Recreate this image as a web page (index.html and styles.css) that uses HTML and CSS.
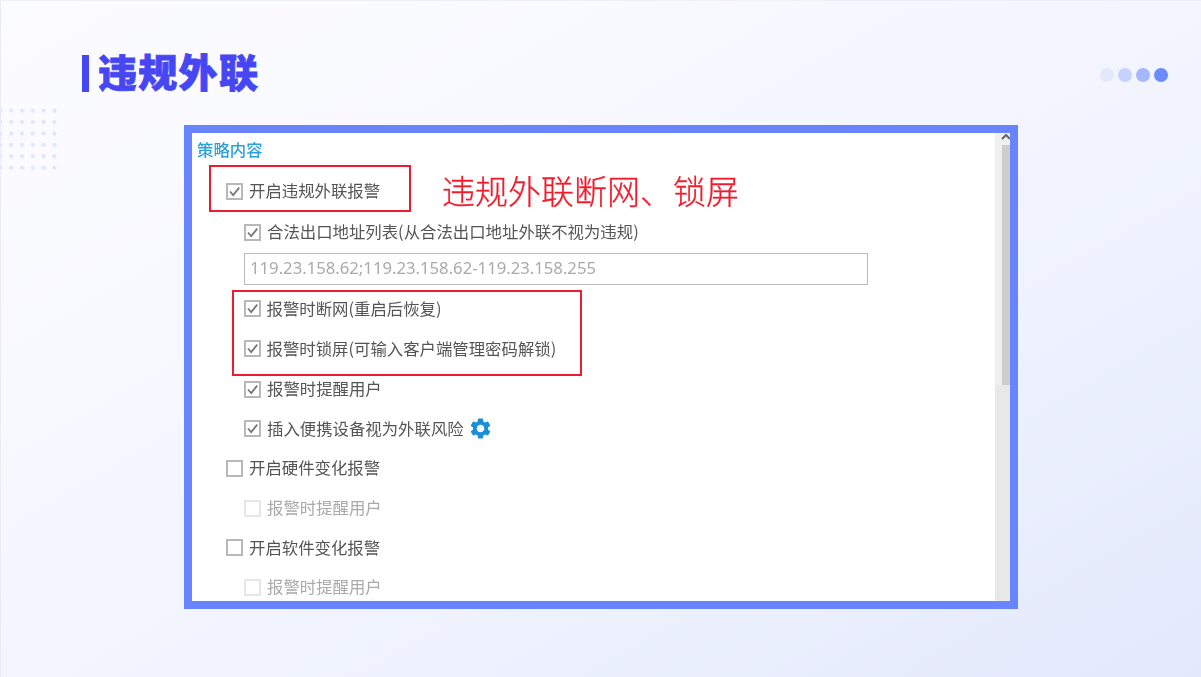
FILE: index.html
```html
<!DOCTYPE html>
<html lang="zh-CN">
<head>
<meta charset="utf-8">
<title>违规外联</title>
<link rel="stylesheet" href="styles.css">
</head>
<body>
<main class="slide">
  <div class="dot-grid"></div>
  <header class="slide-head">
    <span class="title-bar"></span>
    <h1 class="title">违规外联</h1>
    <div class="pager">
      <span class="pip pip-1"></span>
      <span class="pip pip-2"></span>
      <span class="pip pip-3"></span>
      <span class="pip pip-4"></span>
    </div>
  </header>
  <section class="frame">
    <div class="panel">
      <h2 class="panel-title">策略内容</h2>
      <div class="lead-line">
        <div class="red-box red-box-lead">
          <label class="row">
            <span class="box"><svg viewBox="0 0 17 17"><path d="M4 8.5l3.2 3.6L13.2 4.6"/></svg></span>
            <span class="label">开启违规外联报警</span>
          </label>
        </div>
        <p class="note">违规外联断网、锁屏</p>
      </div>
      <label class="row sub first-sub">
        <span class="box"><svg viewBox="0 0 17 17"><path d="M4 8.5l3.2 3.6L13.2 4.6"/></svg></span>
        <span class="label">合法出口地址列表(从合法出口地址外联不视为违规)</span>
      </label>
      <div class="addr">119.23.158.62;119.23.158.62-119.23.158.255</div>
      <div class="red-box red-box-group">
        <label class="row">
          <span class="box"><svg viewBox="0 0 17 17"><path d="M4 8.5l3.2 3.6L13.2 4.6"/></svg></span>
          <span class="label">报警时断网(重启后恢复)</span>
        </label>
        <label class="row">
          <span class="box"><svg viewBox="0 0 17 17"><path d="M4 8.5l3.2 3.6L13.2 4.6"/></svg></span>
          <span class="label">报警时锁屏(可输入客户端管理密码解锁)</span>
        </label>
      </div>
      <div class="rows">
        <label class="row sub">
          <span class="box"><svg viewBox="0 0 17 17"><path d="M4 8.5l3.2 3.6L13.2 4.6"/></svg></span>
          <span class="label">报警时提醒用户</span>
        </label>
        <label class="row sub">
          <span class="box"><svg viewBox="0 0 17 17"><path d="M4 8.5l3.2 3.6L13.2 4.6"/></svg></span>
          <span class="label">插入便携设备视为外联风险</span>
          <svg class="gear" viewBox="0 0 24 24"><path d="M19.14,12.94c0.04-0.3,0.06-0.61,0.06-0.94c0-0.32-0.02-0.64-0.07-0.94l2.03-1.58c0.18-0.14,0.23-0.41,0.12-0.61l-1.92-3.32c-0.12-0.22-0.37-0.29-0.59-0.22l-2.39,0.96c-0.5-0.38-1.03-0.7-1.62-0.94L14.4,2.81c-0.04-0.24-0.24-0.41-0.48-0.41h-3.84c-0.24,0-0.43,0.17-0.47,0.41L9.25,5.35C8.66,5.59,8.12,5.92,7.63,6.29L5.24,5.33c-0.22-0.08-0.47,0-0.59,0.22L2.74,8.87C2.62,9.08,2.66,9.34,2.86,9.48l2.03,1.58C4.84,11.36,4.8,11.69,4.8,12s0.02,0.64,0.07,0.94l-2.03,1.58c-0.18,0.14-0.23,0.41-0.12,0.61l1.92,3.32c0.12,0.22,0.37,0.29,0.59,0.22l2.39-0.96c0.5,0.38,1.03,0.7,1.62,0.94l0.36,2.54c0.05,0.24,0.24,0.41,0.48,0.41h3.84c0.24,0,0.44-0.17,0.47-0.41l0.36-2.54c0.59-0.24,1.13-0.56,1.62-0.94l2.39,0.96c0.22,0.08,0.47,0,0.59-0.22l1.92-3.32c0.12-0.22,0.07-0.47-0.12-0.61L19.14,12.94z M12,15.6c-1.98,0-3.6-1.62-3.6-3.6s1.62-3.6,3.6-3.6s3.6,1.62,3.6,3.6S13.98,15.6,12,15.6z"/></svg>
        </label>
        <label class="row top">
          <span class="box"></span>
          <span class="label">开启硬件变化报警</span>
        </label>
        <label class="row sub off">
          <span class="box"></span>
          <span class="label">报警时提醒用户</span>
        </label>
        <label class="row top">
          <span class="box"></span>
          <span class="label">开启软件变化报警</span>
        </label>
        <label class="row sub off">
          <span class="box"></span>
          <span class="label">报警时提醒用户</span>
        </label>
      </div>
    </div>
    <div class="scrollbar">
      <svg class="scroll-arrow" viewBox="0 0 15 12"><path d="M7 6l4-4 4 4"/></svg>
      <div class="scroll-thumb"></div>
    </div>
  </section>
</main>
</body>
</html>
```
FILE: styles.css
```css
* { box-sizing: border-box; }
html, body { margin: 0; padding: 0; }
body {
  font-family: "Noto Sans CJK SC", "Noto Sans", sans-serif;
  overflow: hidden;
}
.slide {
  position: relative;
  width: 1201px;
  height: 677px;
  padding: 55px 0 0 82px;
  overflow: hidden;
  background: linear-gradient(150deg, #fcfcff 0%, #f8f9ff 30%, #eef2fe 68%, #e3e8fc 100%);
  border-left: 1px solid #e9ecf6;
  border-top: 1px solid #eef0f8;
}
.dot-grid {
  position: absolute;
  left: -6.5px;
  top: 104px;
  width: 65px;
  height: 68px;
  background-image: radial-gradient(circle, #dfe5fb 1.8px, transparent 2.3px);
  background-size: 10.8px 11.4px;
}
.slide-head {
  display: flex;
  align-items: center;
  height: 37px;
  margin-top: -1px;
  margin-left: -1px;
}
.title-bar {
  width: 7px;
  height: 37px;
  background: #4646f2;
}
.title {
  margin: -6px 0 0 9px;
  font-size: 39px;
  line-height: 37px;
  font-weight: 900;
  letter-spacing: 1.3px;
  color: #4646f2;
  -webkit-text-stroke: 0.8px #4646f2;
  white-space: nowrap;
}
.pager {
  display: flex;
  gap: 4px;
  margin-left: 841px;
  margin-top: 3px;
}
.pip {
  width: 14px;
  height: 14px;
  border-radius: 50%;
}
.pip-1 { background: #e3e9fd; }
.pip-2 { background: #c5d2fe; }
.pip-3 { background: #a5b7fe; }
.pip-4 { background: #6a8cff; }
.frame {
  display: flex;
  width: 834px;
  height: 484px;
  margin: 33px 0 0 101px;
  border: 8px solid #6884ff;
  background: #fff;
  overflow: hidden;
}
.panel {
  flex: 1;
  min-width: 0;
  overflow: hidden;
  font-size: 16.4px;
  color: #555;
  filter: blur(0.35px);
}
.panel-title {
  height: 32px;
  margin: 0;
  padding: 1px 0 0 5px;
  font-size: 16.4px;
  font-weight: 500;
  line-height: 30px;
  color: #2ba0dc;
}
.lead-line {
  display: flex;
  align-items: flex-start;
  margin-left: 17px;
}
.red-box { border: 2.5px solid #ee1c2e; }
.red-box-lead {
  width: 202px;
  height: 47px;
  padding: 10px 0 0 15px;
}
.note {
  margin: 2px 0 0 31px;
  font-size: 33px;
  line-height: 46px;
  font-weight: 300;
  color: #f01c2c;
  white-space: nowrap;
  -webkit-text-stroke: 0.3px #f01c2c;
}
.row {
  display: flex;
  align-items: center;
  gap: 6px;
  height: 28px;
  white-space: nowrap;
}
.label { margin-top: -2px; }
.sub { margin-left: 52px; }
.top { margin-left: 34px; }
.first-sub { margin-top: 5px; }
.box {
  flex: none;
  width: 17px;
  height: 17px;
  border: 2px solid #b8b8b8;
  background: #fff;
  position: relative;
}
.box svg {
  position: absolute;
  left: -2px;
  top: -2px;
  width: 17px;
  height: 17px;
  fill: none;
  stroke: #777;
  stroke-width: 1.8;
}
.off { color: #aaa; }
.off .box { border-color: #e6e6e6; }
.addr {
  width: 624px;
  height: 32px;
  margin: 7px 0 0 52px;
  padding-left: 5px;
  border: 1.5px solid #bbb;
  font-family: "Noto Sans", sans-serif;
  font-size: 16.7px;
  line-height: 27px;
  color: #aaa;
  white-space: nowrap;
}
.red-box-group {
  display: flex;
  flex-direction: column;
  gap: 12px;
  width: 350px;
  height: 86px;
  margin: 5px 0 0 40px;
  padding: 2.5px 0 0 9.5px;
}
.rows {
  display: flex;
  flex-direction: column;
  gap: 11.7px;
  margin-top: -1px;
}
.gear {
  width: 25px;
  height: 25px;
  margin-left: -2px;
  fill: #1a8fd8;
}
.scrollbar {
  flex: none;
  display: flex;
  flex-direction: column;
  align-items: flex-end;
  width: 15px;
  background: linear-gradient(#f0f0f0 252px, #e8e8e8 252px);
}
.scroll-arrow {
  flex: none;
  width: 15px;
  height: 12px;
  fill: none;
  stroke: #666;
  stroke-width: 2;
}
.scroll-thumb {
  width: 8px;
  height: 240px;
  background: #cdcdcd;
}
```
